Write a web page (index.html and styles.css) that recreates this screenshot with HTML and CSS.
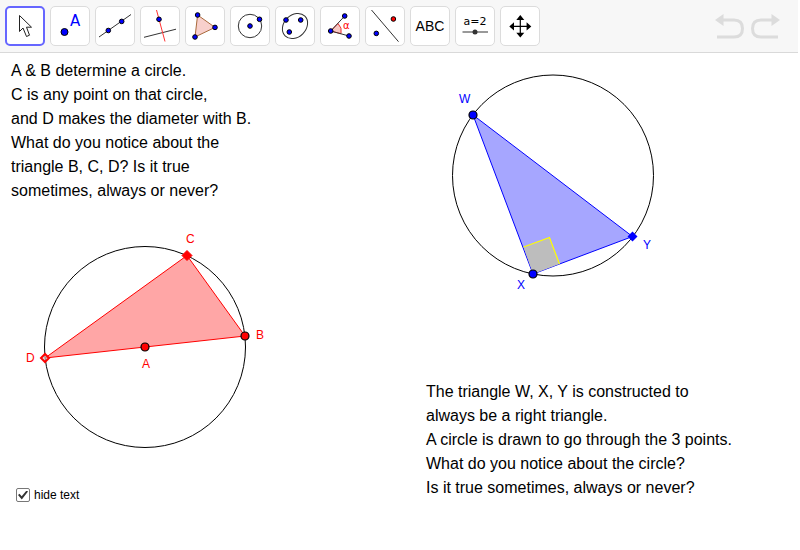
FILE: index.html
```html
<!DOCTYPE html>
<html lang="en">
<head>
<meta charset="utf-8">
<title>Right triangles and circles</title>
<link rel="stylesheet" href="styles.css">
</head>
<body>
<header class="toolbar">
  <div class="tools" role="toolbar" aria-label="Construction tools">
    <button class="tool selected" aria-label="Move"><svg viewBox="0 0 32 32"><path class="cursor" d="M10.5 5.5V21.5L14 18L17.5 26.5L20.5 25.2L17.5 17.2H22.5Z"/></svg></button>
    <button class="tool" aria-label="Point"><svg viewBox="0 0 32 32"><circle class="dot" cx="10.5" cy="22" r="3.5"/><text class="letter" x="16" y="16">A</text></svg></button>
    <button class="tool" aria-label="Line"><svg viewBox="0 0 32 32"><path class="line" d="M0 27L32 4.500"/><circle class="dot" cx="9.3" cy="20.5" r="2.3"/><circle class="dot" cx="22.7" cy="11.4" r="2.3"/></svg></button>
    <button class="tool" aria-label="Perpendicular line"><svg viewBox="0 0 32 32"><path class="line" d="M0 27.3L32 19.2"/><path class="line red-line" d="M12.5 0L21 31.5"/><circle class="dot" cx="15" cy="9.3" r="2.3"/></svg></button>
    <button class="tool" aria-label="Polygon"><svg viewBox="0 0 32 32"><path class="polygon" d="M8.6 5L26 17.4L6 27Z"/><circle class="dot" cx="8.6" cy="5" r="2.3"/><circle class="dot" cx="26" cy="17.4" r="2.3"/><circle class="dot" cx="6" cy="27" r="2.3"/></svg></button>
    <button class="tool" aria-label="Circle with center through point"><svg viewBox="0 0 32 32"><circle class="line" cx="16" cy="16" r="11.7"/><circle class="dot" cx="16" cy="16" r="2.3"/><circle class="dot" cx="25.5" cy="9.3" r="2.3"/></svg></button>
    <button class="tool" aria-label="Ellipse"><svg viewBox="0 0 32 32"><ellipse class="line" cx="16" cy="16" rx="14" ry="11" transform="rotate(-45 16 16)"/><circle class="dot" cx="7" cy="10" r="2.3"/><circle class="dot" cx="21.7" cy="10" r="2.3"/><circle class="dot" cx="10.3" cy="22" r="2.3"/></svg></button>
    <button class="tool" aria-label="Angle"><svg viewBox="0 0 32 32"><path class="sector" d="M6.7 21L14 13.5A10.5 10.5 0 0 1 17 23.7Z"/><path class="line" d="M20.7 6L6.7 21L25 26"/><text class="alpha" x="19" y="19">α</text><circle class="dot" cx="6.7" cy="21" r="2.3"/><circle class="dot" cx="20.7" cy="6" r="2.3"/><circle class="dot" cx="25" cy="26" r="2.3"/></svg></button>
    <button class="tool" aria-label="Reflect about line"><svg viewBox="0 0 32 32"><path class="line" d="M2.5 0L29.5 31.7"/><circle class="dot red-dot" cx="24.4" cy="9" r="2.3"/><circle class="dot" cx="7.3" cy="23.4" r="2.3"/></svg></button>
    <button class="tool" aria-label="Text"><svg viewBox="0 0 32 32"><text class="abc" x="16" y="21">ABC</text></svg></button>
    <button class="tool" aria-label="Slider"><svg viewBox="0 0 32 32"><text class="slider-text" x="16" y="15">a=2</text><path class="track" d="M3.5 22H29"/><circle class="knob" cx="16" cy="22" r="2.5"/></svg></button>
    <button class="tool" aria-label="Move graphics view"><svg viewBox="0 0 32 32"><path class="cross" d="M16.3 8V25M8 16.4H25"/><path d="M16.3 5L20.3 10H12.3ZM16.3 27.6L20.3 22.8H12.3ZM5.3 16.4L10 12.3V20.5ZM27.3 16.4L22.6 12.3V20.5Z"/></svg></button>
  </div>
  <div class="history">
    <button class="step" aria-label="Undo"><svg viewBox="0 0 30 26"><path class="bend" d="M7 7H19Q27.5 7 27.5 15.5T19 24H2"/><path class="head" d="M0 7L8.5 1V13Z"/></svg></button>
    <button class="step" aria-label="Redo"><svg viewBox="0 0 30 26"><path class="bend" d="M21 7H10Q1.500 7 1.500 15.500T10 24H27"/><path class="head" d="M29 7L20.5 1V13Z"/></svg></button>
  </div>
</header>
<main class="board">
  <section class="panel">
    <p class="prompt">A &amp; B determine a circle.<br>C is any point on that circle,<br>and D makes the diameter with B.<br>What do you notice about the<br>triangle B, C, D? Is it true<br>sometimes, always or never?</p>
    <svg class="figure red" width="264" height="284" viewBox="11 203 264 284" role="img" aria-label="Triangle B C D in a circle with center A">
      <circle class="outline" cx="145" cy="347" r="100.5"/>
      <path class="triangle" d="M45 358L187 255.5L245 336Z"/>
      <path class="diamond" d="M187 250.5L192 255.5L187 260.5L182 255.5Z"/>
      <path class="diamond open" d="M45 354L49 358L45 362L41 358Z"/>
      <circle class="point" cx="145" cy="347" r="4"/>
      <circle class="point" cx="245" cy="336" r="4"/>
      <text x="186" y="243">C</text><text x="256" y="339">B</text><text x="142" y="368">A</text><text x="26" y="362">D</text>
    </svg>
    <label class="toggle"><input type="checkbox" checked>hide text</label>
  </section>
  <section class="panel">
    <svg class="figure blue" width="264" height="321" viewBox="426 59 264 321" role="img" aria-label="Right triangle W X Y in a circle">
      <circle class="outline" cx="553" cy="175.5" r="100.5"/>
      <path class="triangle" d="M473 115L533 274L632.5 236.5Z"/>
      <path class="angle-fill" d="M533 274L523.5 247L549.5 237.5L559.5 264Z"/>
      <path class="angle-edge" d="M523.5 247L549.5 237.5L559.5 264"/>
      <path class="diamond" d="M632.5 231.5L637.5 236.5L632.5 241.5L627.5 236.5Z"/>
      <circle class="point" cx="473" cy="115" r="4"/>
      <circle class="point" cx="533" cy="274" r="4"/>
      <text x="459" y="103">W</text><text x="517" y="289">X</text><text x="643" y="249">Y</text>
    </svg>
    <p class="prompt">The triangle W, X, Y is constructed to<br>always be a right triangle.<br>A circle is drawn to go through the 3 points.<br>What do you notice about the circle?<br>Is it true sometimes, always or never?</p>
  </section>
</main>
</body>
</html>
```
FILE: styles.css
```css
* { box-sizing: border-box; }
body {
  margin: 0;
  background: #fff;
  color: #000;
  font-family: "Liberation Sans", Arial, sans-serif;
}
svg { display: block; }

.toolbar {
  display: flex;
  justify-content: space-between;
  align-items: center;
  margin-right: 2px;
  padding: 6px 17px 6px 5px;
  background: #f7f7f7;
  border-bottom: 1px solid #d9d9d9;
}
.tools { display: flex; gap: 5px; }
.tool {
  display: grid;
  place-items: center;
  width: 40px;
  height: 40px;
  padding: 0;
  background: #fff;
  border: 1px solid #dcdcdc;
  border-radius: 5px;
}
.tool.selected { border: 2px solid #6666ff; }
.tool svg { width: 32px; height: 32px; }
.cursor { fill: #fff; stroke: #222; }
.line { fill: none; stroke: #333; }
.red-line { stroke: #f33; }
.dot { fill: #00f; stroke: #000; }
.red-dot { fill: #f00; }
.polygon { fill: #f8d0cc; stroke: #a96a3c; }
.sector { fill: #f8c8c4; stroke: #e33; }
.letter { fill: #00f; font: 15px "DejaVu Sans", sans-serif; }
.alpha { fill: #f00; font: 10px "DejaVu Sans", sans-serif; }
.abc { font: 14px "Liberation Sans", sans-serif; text-anchor: middle; }
.slider-text { font: 11px "DejaVu Sans", sans-serif; text-anchor: middle; }
.track { stroke: #777; stroke-width: 1.5; }
.knob { fill: #333; }
.cross { stroke: #000; stroke-width: 1.2; }

.history { display: flex; gap: 6px; }
.step { padding: 0; border: 0; background: none; }
.step svg { width: 30px; height: 26px; }
.bend { fill: none; stroke: #dcdcdc; stroke-width: 3; }
.head { fill: #dcdcdc; }

.board {
  display: grid;
  grid-template-columns: 415fr 363fr;
  padding: 6px 11px;
}
.prompt {
  margin: 0;
  font-size: 16px;
  line-height: 24px;
  white-space: nowrap;
}
.figure text { font-size: 12px; }
.outline { fill: none; stroke: #000; }
.triangle { fill-opacity: 0.35; }
.point { stroke: #000; stroke-width: 1.2; }
.red text, .red .triangle, .red .point, .red .diamond { fill: #f00; }
.red .triangle, .red .diamond { stroke: #f00; }
.red .open { fill: #ccc; fill-opacity: 0.6; stroke-width: 2; }
.blue text, .blue .triangle, .blue .point, .blue .diamond { fill: #00f; }
.blue .triangle { stroke: #00f; }
.angle-fill { fill: #bdbdbd; }
.angle-edge { fill: none; stroke: #ff0; stroke-width: 1.2; }

.toggle {
  display: flex;
  align-items: center;
  gap: 4px;
  height: 16px;
  margin-left: 5px;
  font-size: 12px;
}
.toggle input {
  appearance: none;
  display: grid;
  place-items: center;
  width: 14px;
  height: 14px;
  margin: 0;
  border: 1px solid #777;
  border-radius: 2px;
  background: #fff;
}
.toggle input:checked::before {
  content: "";
  width: 10px;
  height: 9px;
  background: #333;
  clip-path: polygon(0 50%, 15% 35%, 37% 65%, 85% 0, 100% 12%, 38% 100%);
}
```
